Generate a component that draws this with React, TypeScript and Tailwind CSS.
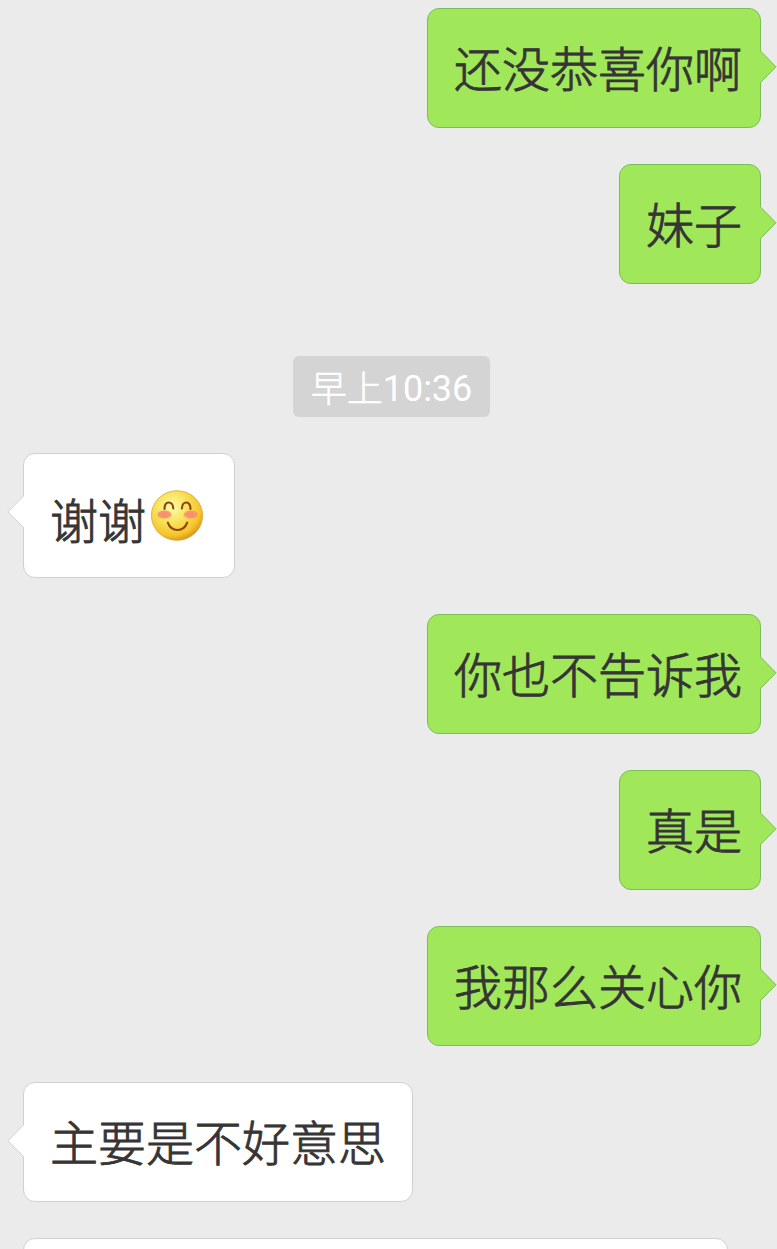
import clsx from 'clsx';
import type { ReactNode } from 'react';

interface BubbleProps {
  own?: boolean;
  className?: string;
  children?: ReactNode;
}

function Tail({ own }: { own?: boolean }) {
  return (
    <svg
      className={clsx(
        'absolute top-[40px] h-[36px] w-[17px]',
        own ? '-right-[17px]' : '-left-[17px] -scale-x-100',
      )}
      viewBox="0 0 17 36"
    >
      <path d="M0 2 L1 2.5 L16 17.8 L1 33 L0 33.5 Z" fill={own ? '#a0e75a' : '#ffffff'} />
      <path
        d="M0.5 2 L16 17.8 L0.5 33.5"
        fill="none"
        stroke={own ? '#78bf56' : '#d0d0d0'}
      />
    </svg>
  );
}

function Bubble({ own, className, children }: BubbleProps) {
  return (
    <div
      className={clsx(
        'relative flex shrink-0 items-center rounded-xl border text-5xl font-light whitespace-nowrap text-[#353535] [-webkit-text-stroke:0.9px_#353535]',
        own
          ? 'mr-4 self-end border-[#78bf56] bg-[#a0e75a] pr-[18px] pl-[26px]'
          : 'ml-[23px] self-start border-[#d0d0d0] bg-white px-[26px]',
        className ?? 'h-[120px] pt-[5px]',
      )}
    >
      {children}
      <span
        className={clsx(
          'absolute top-[42px] h-[31px] w-px',
          own ? '-right-px bg-[#a0e75a]' : '-left-px bg-white',
        )}
      />
      <Tail own={own} />
    </div>
  );
}

function SmileEmoji() {
  return (
    <svg className="ml-1 h-[54px] w-[54px]" viewBox="0 0 54 54">
      <defs>
        <radialGradient id="face" cx="0.4" cy="0.34" r="0.7">
          <stop offset="0" stopColor="#fffbb0" />
          <stop offset="0.4" stopColor="#f8e560" />
          <stop offset="0.8" stopColor="#f5c42c" />
          <stop offset="1" stopColor="#d88f17" />
        </radialGradient>
        <radialGradient id="cheek">
          <stop offset="0" stopColor="#f98a70" />
          <stop offset="0.8" stopColor="#f9956c" stopOpacity="0.95" />
          <stop offset="1" stopColor="#f9a563" stopOpacity="0.5" />
        </radialGradient>
      </defs>
      <ellipse cx="27" cy="26.5" rx="25.6" ry="24.8" fill="url(#face)" stroke="#dfa232" strokeWidth="0.8" />
      <ellipse cx="14.4" cy="25.5" rx="7.5" ry="4.3" fill="url(#cheek)" />
      <ellipse cx="40.9" cy="25.5" rx="7.5" ry="4.3" fill="url(#cheek)" />
      <g fill="none" stroke="#8c4208" strokeWidth="2.1" strokeLinecap="round">
        <path d="M14.5 20 C14.5 11.5 23 11.5 23.3 19.5" />
        <path d="M31.9 19.5 C32.2 11.5 40.3 11.5 40.5 20" />
        <path d="M17.8 33.7 C21.5 43.5 33.5 43.5 37.2 33.7" />
      </g>
    </svg>
  );
}

function Timestamp({ children }: { children: ReactNode }) {
  return (
    <div className="mt-9 ml-[6px] flex h-[61px] shrink-0 items-center self-center rounded-md bg-[#d4d4d4] px-[18px] pt-[5px] text-4xl whitespace-nowrap text-white">
      {children}
    </div>
  );
}

export default function App() {
  return (
    <main className="flex h-[1249px] w-[777px] flex-col gap-9 overflow-hidden bg-[#ebebeb] pt-2 font-[Roboto,'Noto_Sans_CJK_SC',sans-serif]">
      <Bubble own>还没恭喜你啊</Bubble>
      <Bubble own>妹子</Bubble>
      <Timestamp>
        <span className="pt-0.5 font-light [-webkit-text-stroke:0.6px_white]">早上</span>10:36
      </Timestamp>
      <Bubble className="h-[125px] w-[212px]">
        <span className="mt-[15px]">谢谢</span>
        <SmileEmoji />
      </Bubble>
      <Bubble own>你也不告诉我</Bubble>
      <Bubble own>真是</Bubble>
      <Bubble own>我那么关心你</Bubble>
      <Bubble>主要是不好意思</Bubble>
      <Bubble className="h-[120px] w-[705px]" />
    </main>
  );
}
